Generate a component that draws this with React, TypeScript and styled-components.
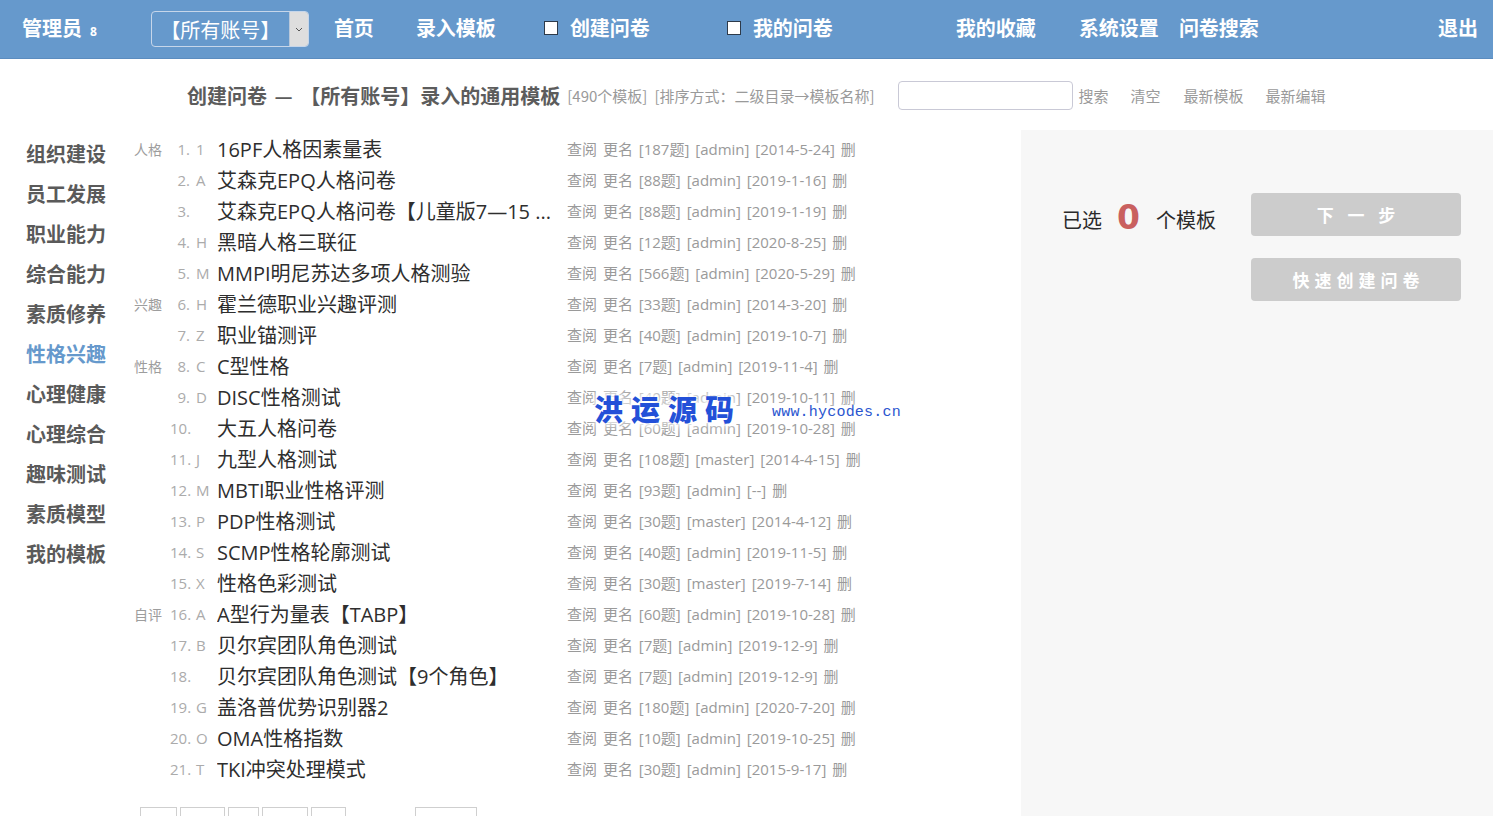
import React from "react";
import styled, { createGlobalStyle } from "styled-components";

const GlobalStyle = createGlobalStyle`
  html, body { margin: 0; padding: 0; background: #fff; }
  body { font-family: "Open Sans", "Noto Sans CJK SC", sans-serif; }
  * { box-sizing: border-box; }
`;

const Page = styled.div`
  position: relative;
  min-width: 1493px;
`;

const TopBar = styled.header`
  height: 59px;
  background: #6699cc;
  border-bottom: 1px solid #5b8cbf;
  display: flex;
  align-items: center;
  padding: 0 15px 3px 22px;
  color: #fff;
  font-family: "Noto Sans CJK SC", sans-serif;
`;

const Brand = styled.span`
  font-size: 20px;
  font-weight: 700;
  display: flex;
  align-items: baseline;
`;

const BrandCount = styled.span`
  font-size: 12px;
  font-weight: 700;
  margin-left: 8px;
  font-family: "Open Sans", sans-serif;
`;

const AccountSelect = styled.div`
  margin-left: 54px;
  width: 158px;
  height: 36px;
  margin-top: 3px;
  border: 1px solid #c6d6ea;
  border-radius: 4px;
  display: flex;
  overflow: hidden;
`;

const SelectText = styled.span`
  flex: 1;
  display: flex;
  align-items: center;
  justify-content: center;
  font-size: 20px;
  color: #fff;
`;

const SelectArrow = styled.span`
  width: 19px;
  background: #dedede;
  display: flex;
  align-items: center;
  justify-content: center;
  border-left: 1px solid #b9c8da;
`;

const NavItem = styled.span<{ $ml: number | "auto" }>`
  margin-left: ${(p) => (p.$ml === "auto" ? "auto" : `${p.$ml}px`)};
  font-size: 20px;
  font-weight: 700;
  display: flex;
  align-items: center;
  white-space: nowrap;
`;

const Check = styled.span`
  width: 14px;
  height: 14px;
  background: #fff;
  border: 1px solid #2d3a4a;
  margin-right: 12px;
`;

const SubHeader = styled.div`
  height: 71px;
  display: flex;
  align-items: center;
  padding: 2px 0 0 187px;
  white-space: nowrap;
  font-family: "Noto Sans CJK SC", sans-serif;
`;

const Title = styled.span`
  font-size: 20px;
  font-weight: 700;
  color: #5c5c5c;
  word-spacing: 3px;
`;

const Hint = styled.span<{ $ml: number }>`
  margin-left: ${(p) => p.$ml}px;
  font-size: 15px;
  color: #9a9a9a;
`;

const SearchBox = styled.input`
  margin-left: 23px;
  width: 175px;
  height: 29px;
  border: 1px solid #c9c9d6;
  border-radius: 4px;
  outline: none;
`;

const Main = styled.div`
  display: flex;
  align-items: stretch;
`;

const Sidebar = styled.nav`
  width: 130px;
  flex: none;
  padding: 4px 0 0 26px;
  font-family: "Noto Sans CJK SC", sans-serif;
`;

const SideItem = styled.div<{ $active?: boolean }>`
  height: 40px;
  line-height: 40px;
  font-size: 20px;
  font-weight: 700;
  color: ${(p) => (p.$active ? "#6699cc" : "#5a5a5a")};
`;

const ListArea = styled.section`
  flex: 1;
  padding: 3px 0 0 4px;
`;

const Row = styled.div`
  display: grid;
  grid-template-columns: 36px 20px 27px 350px auto;
  height: 31px;
  align-items: center;
  white-space: nowrap;
`;

const Cat = styled.span`
  font-size: 14px;
  color: #9d9d9d;
  font-family: "Noto Sans CJK SC", sans-serif;
`;

const Num = styled.span`
  font-size: 15px;
  color: #ababab;
  text-align: right;
`;

const Letter = styled.span`
  font-size: 15px;
  color: #ababab;
  padding-left: 6px;
`;

const Name = styled.span`
  font-size: 20px;
  color: #2e2e2e;
  overflow: hidden;
  text-overflow: ellipsis;
  padding-right: 8px;
`;

const Meta = styled.span`
  font-size: 15px;
  color: #9a9a9a;
  word-spacing: 2px;
`;

const Pager = styled.div`
  display: flex;
  gap: 3px;
  margin: 23px 0 0 6px;
`;

const PageBox = styled.span<{ $w: number; $ml?: number }>`
  width: ${(p) => p.$w}px;
  margin-left: ${(p) => p.$ml ?? 0}px;
  height: 28px;
  border: 1px solid #cfcfcf;
  font-size: 13px;
  color: #666;
  display: flex;
  align-items: center;
  justify-content: center;
`;

const SidePanel = styled.aside`
  width: 472px;
  flex: none;
  background: #f7f7f7;
  padding: 63px 32px 0 41px;
  display: flex;
  justify-content: space-between;
  align-items: flex-start;
  font-family: "Noto Sans CJK SC", sans-serif;
`;

const Counter = styled.div`
  height: 43px;
  margin-top: 5px;
  display: flex;
  align-items: center;
  font-size: 20px;
  color: #2a2a2a;
`;

const Zero = styled.span`
  font-family: "DejaVu Sans", sans-serif;
  font-size: 33px;
  font-weight: 700;
  color: #c9605f;
  margin: 0 16px 4px 15px;
  line-height: 1;
`;

const ButtonCol = styled.div`
  display: flex;
  flex-direction: column;
  gap: 22px;
`;

const GrayButton = styled.button`
  width: 210px;
  height: 43px;
  border: none;
  border-radius: 4px;
  background: #cccccc;
  color: #fff;
  font-family: "Noto Sans CJK SC", sans-serif;
  font-size: 17px;
  font-weight: 700;
  letter-spacing: 5px;
  padding: 0 0 0 5px;
`;

const Watermark = styled.div`
  position: absolute;
  left: 594px;
  top: 387px;
  display: flex;
  align-items: center;
  pointer-events: none;
  text-shadow: 0 0 6px #fff, 0 0 10px #fff, 0 0 14px #fff, 0 0 18px #fff;
`;

const MarkCn = styled.span`
  font-family: "Noto Sans CJK SC", sans-serif;
  font-size: 29px;
  font-weight: 900;
  letter-spacing: 8px;
  color: #2350d8;
`;

const MarkUrl = styled.span`
  margin-left: 30px;
  margin-top: 8px;
  font-family: "Liberation Mono", monospace;
  font-size: 15px;
  letter-spacing: 0.2px;
  color: #2a55cf;
`;

type Item = { cat?: string; num: string; letter?: string; name: string; q: string; by: string; date: string };

const items: Item[] = [
  { cat: "人格", num: "1.", letter: "1", name: "16PF人格因素量表", q: "187", by: "admin", date: "2014-5-24" },
  { num: "2.", letter: "A", name: "艾森克EPQ人格问卷", q: "88", by: "admin", date: "2019-1-16" },
  { num: "3.", name: "艾森克EPQ人格问卷【儿童版7—15 ...", q: "88", by: "admin", date: "2019-1-19" },
  { num: "4.", letter: "H", name: "黑暗人格三联征", q: "12", by: "admin", date: "2020-8-25" },
  { num: "5.", letter: "M", name: "MMPI明尼苏达多项人格测验", q: "566", by: "admin", date: "2020-5-29" },
  { cat: "兴趣", num: "6.", letter: "H", name: "霍兰德职业兴趣评测", q: "33", by: "admin", date: "2014-3-20" },
  { num: "7.", letter: "Z", name: "职业锚测评", q: "40", by: "admin", date: "2019-10-7" },
  { cat: "性格", num: "8.", letter: "C", name: "C型性格", q: "7", by: "admin", date: "2019-11-4" },
  { num: "9.", letter: "D", name: "DISC性格测试", q: "40", by: "admin", date: "2019-10-11" },
  { num: "10.", name: "大五人格问卷", q: "60", by: "admin", date: "2019-10-28" },
  { num: "11.", letter: "J", name: "九型人格测试", q: "108", by: "master", date: "2014-4-15" },
  { num: "12.", letter: "M", name: "MBTI职业性格评测", q: "93", by: "admin", date: "--" },
  { num: "13.", letter: "P", name: "PDP性格测试", q: "30", by: "master", date: "2014-4-12" },
  { num: "14.", letter: "S", name: "SCMP性格轮廓测试", q: "40", by: "admin", date: "2019-11-5" },
  { num: "15.", letter: "X", name: "性格色彩测试", q: "30", by: "master", date: "2019-7-14" },
  { cat: "自评", num: "16.", letter: "A", name: "A型行为量表【TABP】", q: "60", by: "admin", date: "2019-10-28" },
  { num: "17.", letter: "B", name: "贝尔宾团队角色测试", q: "7", by: "admin", date: "2019-12-9" },
  { num: "18.", name: "贝尔宾团队角色测试【9个角色】", q: "7", by: "admin", date: "2019-12-9" },
  { num: "19.", letter: "G", name: "盖洛普优势识别器2", q: "180", by: "admin", date: "2020-7-20" },
  { num: "20.", letter: "O", name: "OMA性格指数", q: "10", by: "admin", date: "2019-10-25" },
  { num: "21.", letter: "T", name: "TKI冲突处理模式", q: "30", by: "admin", date: "2015-9-17" },
];

const sideItems = ["组织建设", "员工发展", "职业能力", "综合能力", "素质修养", "性格兴趣", "心理健康", "心理综合", "趣味测试", "素质模型", "我的模板"];

export default function App() {
  return (
    <Page>
      <GlobalStyle />
      <TopBar>
        <Brand>
          管理员<BrandCount>8</BrandCount>
        </Brand>
        <AccountSelect>
          <SelectText>【所有账号】</SelectText>
          <SelectArrow>
            <svg width="8" height="5" viewBox="0 0 8 5">
              <path d="M1 1 L4 4 L7 1" fill="none" stroke="#555" strokeWidth="1" />
            </svg>
          </SelectArrow>
        </AccountSelect>
        <NavItem $ml={25}>首页</NavItem>
        <NavItem $ml={42}>录入模板</NavItem>
        <NavItem $ml={48}>
          <Check />
          创建问卷
        </NavItem>
        <NavItem $ml={77}>
          <Check />
          我的问卷
        </NavItem>
        <NavItem $ml={123}>我的收藏</NavItem>
        <NavItem $ml={43}>系统设置</NavItem>
        <NavItem $ml={20}>问卷搜索</NavItem>
        <NavItem $ml="auto">退出</NavItem>
      </TopBar>

      <SubHeader>
        <Title>创建问卷 — 【所有账号】录入的通用模板</Title>
        <Hint $ml={7}>[490个模板]</Hint>
        <Hint $ml={7}>[排序方式：二级目录→模板名称]</Hint>
        <SearchBox />
        <Hint $ml={6}>搜索</Hint>
        <Hint $ml={22}>清空</Hint>
        <Hint $ml={23}>最新模板</Hint>
        <Hint $ml={22}>最新编辑</Hint>
      </SubHeader>

      <Main>
        <Sidebar>
          {sideItems.map((s) => (
            <SideItem key={s} $active={s === "性格兴趣"}>
              {s}
            </SideItem>
          ))}
        </Sidebar>

        <ListArea>
          {items.map((it) => (
            <Row key={it.num}>
              <Cat>{it.cat ?? ""}</Cat>
              <Num>{it.num}</Num>
              <Letter>{it.letter ?? ""}</Letter>
              <Name>{it.name}</Name>
              <Meta>
                查阅 更名 [{it.q}题] [{it.by}] [{it.date}] 删
              </Meta>
            </Row>
          ))}
          <Pager>
            <PageBox $w={37}>首页</PageBox>
            <PageBox $w={45}>上一页</PageBox>
            <PageBox $w={31}>1</PageBox>
            <PageBox $w={46}>下一页</PageBox>
            <PageBox $w={35}>尾页</PageBox>
            <PageBox $w={62} $ml={66}>1/24</PageBox>
          </Pager>
        </ListArea>

        <SidePanel>
          <Counter>
            已选<Zero>0</Zero>个模板
          </Counter>
          <ButtonCol>
            <GrayButton>下 一 步</GrayButton>
            <GrayButton>快速创建问卷</GrayButton>
          </ButtonCol>
        </SidePanel>
      </Main>

      <Watermark>
        <MarkCn>洪运源码</MarkCn>
        <MarkUrl>www.hycodes.cn</MarkUrl>
      </Watermark>
    </Page>
  );
}
